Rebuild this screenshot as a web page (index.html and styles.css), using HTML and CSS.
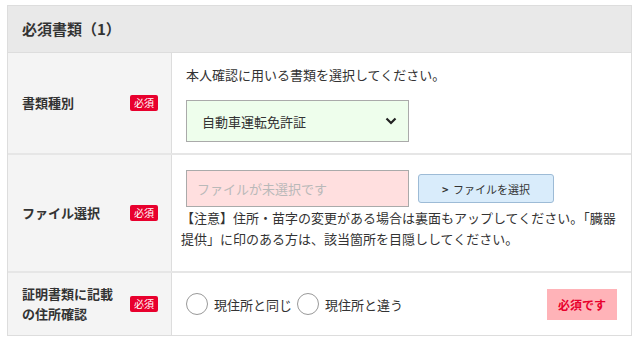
FILE: index.html
```html
<!DOCTYPE html>
<html lang="ja">
<head>
    <meta charset="UTF-8">
    <meta name="viewport" content="width=device-width, initial-scale=1.0">
    <title>必須書類</title>
    <link rel="stylesheet" href="styles.css">
</head>
<body>
    <div class="form-table">
        <div class="form-head">必須書類（1）</div>

        <div class="form-row row-type">
            <div class="form-label">
                <span>書類種別</span>
                <span class="badge">必須</span>
            </div>
            <div class="form-body">
                <p class="lead">本人確認に用いる書類を選択してください。</p>
                <div class="select-box">
                    <span>自動車運転免許証</span>
                    <svg class="chevron" width="12" height="8" viewBox="0 0 12 8"><path d="M1.5 1.5 L6 6 L10.5 1.5" fill="none" stroke="#222" stroke-width="2.2"/></svg>
                </div>
            </div>
        </div>

        <div class="form-row row-file">
            <div class="form-label">
                <span>ファイル選択</span>
                <span class="badge">必須</span>
            </div>
            <div class="form-body">
                <div class="file-line">
                    <div class="file-input">ファイルが未選択です</div>
                    <button class="file-btn"><span class="arrow">&gt;</span> ファイルを選択</button>
                </div>
                <p class="note">【注意】住所・苗字の変更がある場合は裏面もアップしてください。「臓器提供」に印のある方は、該当箇所を目隠ししてください。</p>
            </div>
        </div>

        <div class="form-row row-addr">
            <div class="form-label">
                <span>証明書類に記載<br>の住所確認</span>
                <span class="badge">必須</span>
            </div>
            <div class="form-body radios">
                <label class="radio"><span class="circle"></span>現住所と同じ</label>
                <label class="radio"><span class="circle"></span>現住所と違う</label>
                <span class="error">必須です</span>
            </div>
        </div>
    </div>
</body>
</html>
```

FILE: styles.css
```css
body {
    margin: 0;
    background: #ffffff;
    font-family: "Noto Sans CJK JP", "Noto Sans", sans-serif;
    color: #333333;
}

.form-table {
    margin: 5px 8px 0 7px;
    border: 1px solid #dddddd;
}

.form-head {
    height: 46px;
    line-height: 46px;
    padding-left: 14px;
    background: #e9e9e9;
    border-bottom: 1px solid #dddddd;
    font-size: 15px;
    font-weight: bold;
}

.form-row {
    display: grid;
    grid-template-columns: 164px 1fr;
    border-bottom: 2px solid #e6e6e6;
}

.form-row:last-child {
    border-bottom: none;
}

.form-label {
    display: flex;
    justify-content: space-between;
    align-items: center;
    padding: 0 13px 0 14px;
    background: #f4f4f4;
    border-right: 1px solid #dddddd;
    font-size: 13px;
    font-weight: bold;
    line-height: 20px;
}

.badge {
    background: #e8002d;
    color: #ffffff;
    font-size: 10px;
    font-weight: normal;
    line-height: 16px;
    padding: 0 4px;
    border-radius: 2px;
}

.form-body {
    padding: 0 14px;
    font-size: 13px;
}

.row-type {
    height: 100px;
}

.row-type .form-body {
    padding-top: 12px;
}

.lead {
    margin: 0 0 15px;
    line-height: 20px;
}

.select-box {
    box-sizing: border-box;
    width: 223px;
    height: 42px;
    display: flex;
    align-items: center;
    justify-content: space-between;
    padding: 0 11px 0 15px;
    background: #eefeec;
    border: 1px solid #aaaaaa;
}

.row-file {
    height: 116px;
}

.row-file .form-body {
    padding-top: 15px;
    padding-left: 14px;
}

.file-line {
    display: flex;
    align-items: flex-start;
    gap: 9px;
}

.file-input {
    box-sizing: border-box;
    width: 223px;
    height: 37px;
    line-height: 35px;
    padding-left: 10px;
    background: #ffdfdf;
    border: 1px solid #aaaaaa;
    color: #b9b9b9;
}

.file-btn {
    margin-top: 4px;
    width: 136px;
    height: 29px;
    background: #d9ecfb;
    border: 1px solid #9dbbd6;
    border-radius: 3px;
    font-family: inherit;
    font-size: 11px;
    color: #333333;
}

.file-btn .arrow {
    font-weight: bold;
    margin-right: 2px;
}

.note {
    margin: 0 -8px 0 -5px;
    line-height: 21px;
}

.row-addr {
    height: 62px;
}

.radios {
    display: flex;
    align-items: center;
}

.radio {
    display: flex;
    align-items: center;
    margin-right: 5px;
}

.circle {
    width: 20px;
    height: 20px;
    border: 1px solid #999999;
    border-radius: 50%;
    background: #ffffff;
    margin-right: 6px;
}

.error {
    margin-left: auto;
    width: 70px;
    height: 31px;
    line-height: 31px;
    text-align: center;
    background: #ffb3b8;
    color: #e8002d;
    font-size: 12px;
    font-weight: bold;
}
```
